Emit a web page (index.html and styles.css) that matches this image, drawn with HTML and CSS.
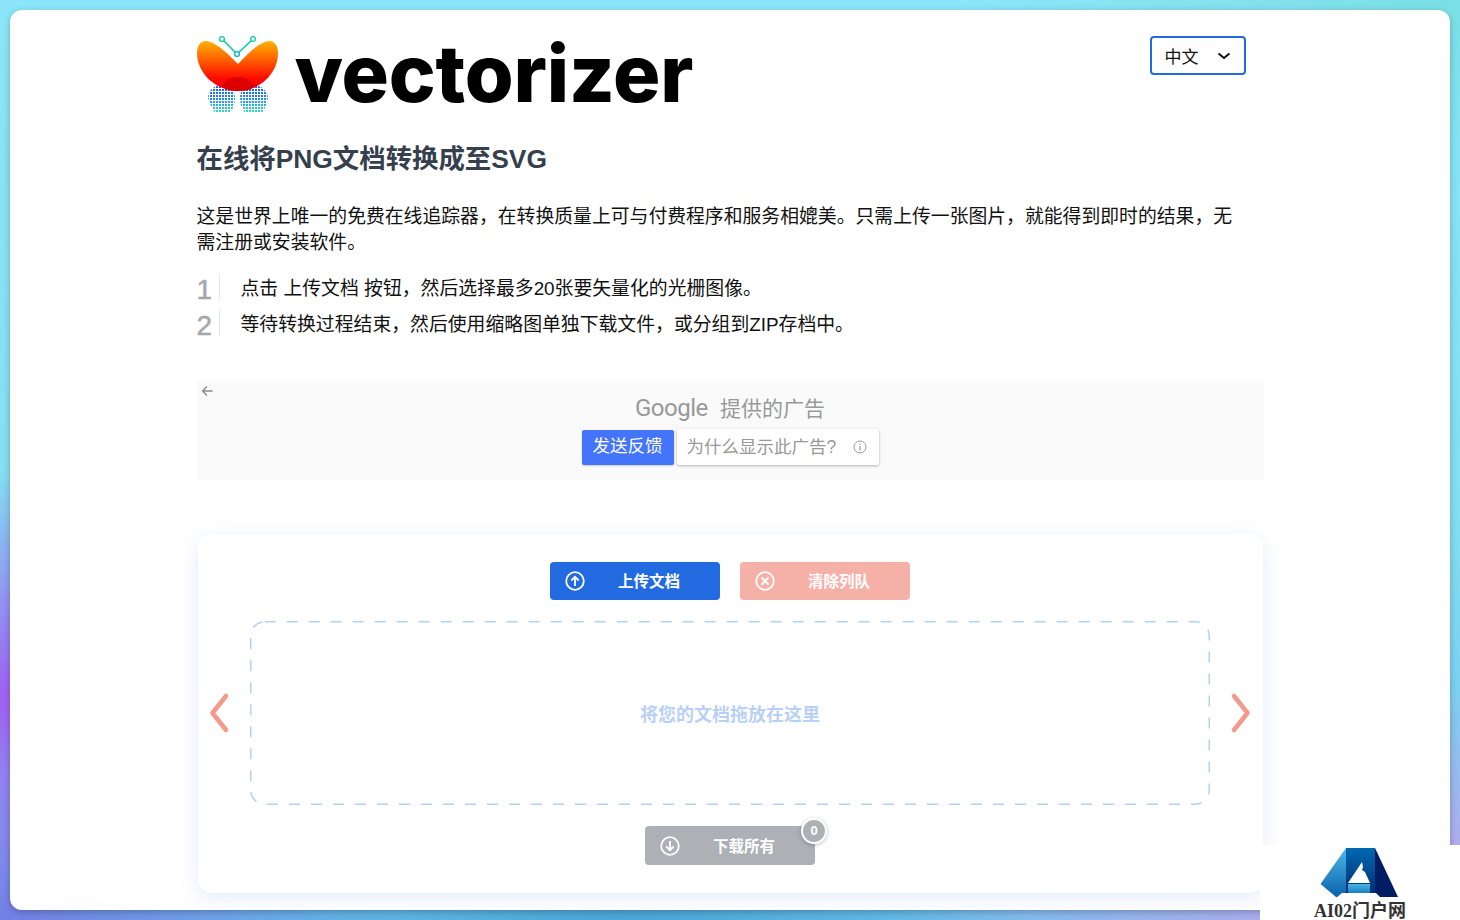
FILE: index.html
```html
<!DOCTYPE html>
<html lang="zh">
<head>
  <meta charset="UTF-8" />
  <title>Vectorizer</title>
  <meta name="viewport" content="width=device-width, initial-scale=1.0" />
  <link rel="stylesheet" href="styles.css">
</head>
<body>

  <div class="sheet">
    <div class="content">

      <div class="top-row">
        <div class="brand">
          <svg class="brand-mark" width="84" height="80" viewBox="0 0 84 80">
            <defs>
              <linearGradient id="wing" x1="0" y1="0" x2="0" y2="1">
                <stop offset="0" stop-color="#ffb300"/>
                <stop offset="0.75" stop-color="#ff0a00"/>
                <stop offset="1" stop-color="#f00000"/>
              </linearGradient>
              <linearGradient id="dots" gradientUnits="userSpaceOnUse" x1="0" y1="50" x2="0" y2="77">
                <stop offset="0" stop-color="#1f56f0"/>
                <stop offset="0.55" stop-color="#2196ee"/>
                <stop offset="1" stop-color="#30e8a8"/>
              </linearGradient>
            </defs>
            <path d="M11 62C11 54 18 49 25 49s13 5 13 13l-1 8-4 7H18l-4-7zM43 62c0-8 6-13 13-13s15 5 15 13l-2 8-4 7H48l-4-7z" fill="url(#dots)"/>
            <path class="brand-grid" d="M10 52.500h62M10 55.500h62M10 58.500h62M10 61.500h62M10 64.500h62M10 67.500h62M10 70.500h62M10 73.500h62M10 76.500h62M12.500 48v30M15.500 48v30M18.500 48v30M21.500 48v30M24.500 48v30M27.500 48v30M30.500 48v30M33.500 48v30M36.500 48v30M45.500 48v30M48.500 48v30M51.500 48v30M54.500 48v30M57.500 48v30M60.500 48v30M63.500 48v30M66.500 48v30M69.500 48v30"/>
            <path d="M41 28C33 20 20 6 9 5 3 5 0 10 0 17 0 38 20 55 41 55S81 38 81 17C81 10 78 5 72 5 61 6 49 20 41 28z" fill="url(#wing)"/>
            <path d="M25 51C28 44 34 41 41 41S54 44 58 51C52 54 47 55 41 55S30 54 25 51z" fill="#dd0000"/>
            <path d="M25 3 40 18 56 3" fill="none" stroke="#10c9a8" stroke-width="1.600"/>
            <circle cx="25" cy="3" r="2.400" fill="#fff" stroke="#14d49a" stroke-width="1.400"/>
            <circle cx="56" cy="3" r="2.400" fill="#fff" stroke="#14d49a" stroke-width="1.400"/>
            <circle cx="40" cy="18" r="2.400" fill="#fff" stroke="#0cb4d8" stroke-width="1.400"/>
          </svg>
          <span class="wordmark">vectorizer</span>
        </div>
        <div class="lang-select">
          <span>中文</span>
          <svg width="14" height="10" viewBox="0 0 14 10"><path d="M1.500 2.500 7 7l5.500-4.500" fill="none" stroke="#111" stroke-width="2"/></svg>
        </div>
      </div>

      <h1 class="page-title">在线将PNG文档转换成至SVG</h1>
      <p class="intro">这是世界上唯一的免费在线追踪器，在转换质量上可与付费程序和服务相媲美。只需上传一张图片，就能得到即时的结果，无需注册或安装软件。</p>

      <ol class="steps">
        <li><span class="step-num">1</span><span>点击 上传文档 按钮，然后选择最多20张要矢量化的光栅图像。</span></li>
        <li><span class="step-num">2</span><span>等待转换过程结束，然后使用缩略图单独下载文件，或分组到ZIP存档中。</span></li>
      </ol>

      <div class="ad-box">
        <svg class="ad-back" width="12" height="12" viewBox="0 0 12 12"><path d="M11.500 6H2M6 1.500 1.500 6 6 10.500" fill="none" stroke="#8a8a8a" stroke-width="1.300"/></svg>
        <div class="ad-label"><span class="ad-google">Google</span> 提供的广告</div>
        <div class="ad-buttons">
          <span class="ad-send">发送反馈</span>
          <span class="ad-why">为什么显示此广告?
            <svg width="14" height="14" viewBox="0 0 14 14"><circle cx="7" cy="7" r="6" fill="none" stroke="#999" stroke-width="1"/><path d="M7 6v4.500M7 3.500v1.200" stroke="#999" stroke-width="1.200"/></svg>
          </span>
        </div>
      </div>

      <div class="tool-card">
        <div class="tool-actions">
          <div class="btn btn-upload">
            <svg width="20" height="20" viewBox="0 0 20 20"><circle cx="10" cy="10" r="8.800" fill="none" stroke="#fff" stroke-width="1.800"/><path d="M10 15V6M6.300 9.500 10 5.800l3.700 3.700" fill="none" stroke="#fff" stroke-width="1.800"/></svg>
            <span>上传文档</span>
          </div>
          <div class="btn btn-clear">
            <svg width="20" height="20" viewBox="0 0 20 20"><circle cx="10" cy="10" r="8.800" fill="none" stroke="#fff" stroke-width="1.800"/><path d="M6.500 6.500l7 7M13.500 6.500l-7 7" fill="none" stroke="#fff" stroke-width="1.800"/></svg>
            <span>清除列队</span>
          </div>
        </div>

        <div class="drop-row">
          <svg class="chev" width="22" height="40" viewBox="0 0 22 40"><path d="M17 3 3.500 20 17 37" fill="none" stroke="#f39a8b" stroke-width="4.500" stroke-linecap="round" stroke-linejoin="round"/></svg>
          <div class="drop-zone">
            <svg class="drop-outline" width="960" height="184" viewBox="0 0 960 184"><rect x="0.750" y="0.750" width="958.500" height="182.500" rx="14" fill="none" stroke="#b7cff6" stroke-width="1.500" stroke-dasharray="11 11"/></svg>
            将您的文档拖放在这里
          </div>
          <svg class="chev" width="22" height="40" viewBox="0 0 22 40"><path d="M4 3l13.500 17L4 37" fill="none" stroke="#f39a8b" stroke-width="4.500" stroke-linecap="round" stroke-linejoin="round"/></svg>
        </div>

        <div class="tool-footer">
          <div class="btn btn-download">
            <svg width="20" height="20" viewBox="0 0 20 20"><circle cx="10" cy="10" r="8.800" fill="none" stroke="#fff" stroke-width="1.800"/><path d="M10 5v9M6.300 10.500 10 14.200l3.700-3.700" fill="none" stroke="#fff" stroke-width="1.800"/></svg>
            <span>下载所有</span>
            <b class="badge">0</b>
          </div>
        </div>
      </div>

    </div>
  </div>

  <div class="watermark">
    <svg width="80" height="52" viewBox="0 0 80 52">
      <defs>
        <linearGradient id="wmLeft" x1="0" y1="0" x2="0" y2="1"><stop offset="0" stop-color="#4fb8ea"/><stop offset="1" stop-color="#0a62ab"/></linearGradient>
        <linearGradient id="wmMid" x1="0" y1="0" x2="0" y2="1"><stop offset="0" stop-color="#0068b0"/><stop offset="1" stop-color="#002a70"/></linearGradient>
        <linearGradient id="wmBase" x1="0" y1="0" x2="0" y2="1"><stop offset="0" stop-color="#4db4e6"/><stop offset="1" stop-color="#0a72b8"/></linearGradient>
      </defs>
      <path d="M26 1 .5 37 16 50h12V1z" fill="url(#wmLeft)"/>
      <path d="M26 1h29v49H26z" fill="url(#wmMid)"/>
      <path d="M55 1l23 49H55z" fill="#001c62"/>
      <path d="M28 36 42 15l1 5-1 3 3 2 5 11z" fill="#fff"/>
      <path d="M28 37h22v11H28z" fill="url(#wmBase)"/>
      <path d="M16 51l6-5h34l5 5z" fill="#fff"/>
    </svg>
    <span>AI02门户网</span>
  </div>

</body>
</html>
```

FILE: styles.css
```css
/* Basic reset */
* {
  margin: 0;
  padding: 0;
  box-sizing: border-box;
}

body {
  height: 920px;
  overflow: hidden;
  padding: 10px;
  font-family: "Liberation Sans", "Noto Sans CJK SC", sans-serif;
  color: #111;
  background:
    radial-gradient(ellipse 240px 230px at 0 700px, #a060f2 0%, rgba(160,96,242,0) 100%),
    radial-gradient(ellipse 560px 240px at 1460px 920px, #cba2ec 0%, rgba(203,162,236,0) 100%),
    radial-gradient(ellipse 420px 130px at 620px 920px, #4aa6d8 0%, rgba(74,166,216,0) 100%),
    radial-gradient(ellipse 420px 160px at 0 920px, #7080e4 0%, rgba(112,128,228,0) 100%),
    radial-gradient(ellipse 500px 200px at 1460px 0, #7bdfe6 0%, rgba(123,223,230,0) 100%),
    linear-gradient(180deg, #8be6f9 0%, #84dff2 55%, #6fc2ee 100%);
}

.sheet {
  height: 900px;
  background-color: #fff;
  border-radius: 12px;
  overflow: hidden;
  box-shadow: 0 2px 7px rgba(0,0,0,0.25);
}

.content {
  width: 1067px;
  margin: 0 auto;
}

/* Header */
.top-row {
  display: flex;
  justify-content: space-between;
  align-items: flex-start;
  padding: 26px 18px 0 0;
  height: 124px;
}

.brand {
  display: flex;
  align-items: flex-start;
  gap: 14px;
  height: 80px;
}

.brand-mark {
  flex: none;
}

.brand-grid {
  fill: none;
  stroke: #fff;
  stroke-width: 1;
}

.wordmark {
  margin-top: -3px;
  font-family: Inter, sans-serif;
  font-size: 79px;
  font-weight: 800;
  letter-spacing: -0.200px;
  color: #000;
  line-height: 80px;
}

.lang-select {
  display: flex;
  align-items: center;
  justify-content: space-between;
  width: 96px;
  height: 39px;
  padding: 0 13px;
  border: 2px solid #226ae0;
  border-radius: 4px;
  font-size: 17px;
}

/* Intro text */
.page-title {
  margin-top: 7px;
  font-size: 26.400px;
  line-height: 36px;
  font-weight: 700;
  color: #363f4d;
}

.intro {
  margin-top: 27px;
  width: 1050px;
  font-size: 18.830px;
  line-height: 26px;
}

.steps {
  list-style: none;
  margin-top: 12px;
}

.steps li {
  display: flex;
  align-items: center;
  height: 36px;
  font-size: 18.850px;
}

.step-num {
  width: 23px;
  height: 27px;
  margin-right: 21px;
  border-right: 1px solid #e8e8e8;
  font-size: 28px;
  line-height: 33px;
  color: #a3a7ad;
  -webkit-text-stroke: 0.500px #a3a7ad;
}

/* Ad block */
.ad-box {
  position: relative;
  height: 99px;
  margin-top: 41px;
  padding-top: 14px;
  background-color: #fafafa;
  text-align: center;
}

.ad-back {
  position: absolute;
  left: 4px;
  top: 4px;
}

.ad-label {
  font-family: Roboto, "Noto Sans CJK SC", sans-serif;
  font-size: 21px;
  line-height: 27px;
  color: #999;
}

.ad-google {
  font-size: 24px;
  margin-right: 7px;
  letter-spacing: -0.500px;
}

.ad-buttons {
  display: flex;
  justify-content: center;
  gap: 3px;
  margin-top: 6px;
  font-size: 17.500px;
}

.ad-send {
  width: 92px;
  height: 35px;
  margin-top: 1px;
  border-radius: 2px;
  background-color: #4374f9;
  color: #fff;
  line-height: 33px;
  box-shadow: 0 1px 2px rgba(0,0,0,0.2);
}

.ad-why {
  display: flex;
  align-items: center;
  justify-content: space-between;
  width: 202px;
  height: 36px;
  padding: 0 12px 3px 10px;
  border-radius: 2px;
  background-color: #fff;
  color: #999;
  box-shadow: 0 1px 3px rgba(0,0,0,0.3);
}

.ad-why svg {
  margin-top: 3px;
}

/* Upload card */
.tool-card {
  width: 1065px;
  height: 359px;
  margin: 54px 0 0 1px;
  padding-top: 28px;
  background-color: #fff;
  border-radius: 14px;
  box-shadow: 0 5px 20px rgba(60,110,230,0.14);
}

.tool-actions {
  display: flex;
  justify-content: center;
  gap: 20px;
}

.btn {
  position: relative;
  display: flex;
  align-items: center;
  width: 170px;
  height: 38px;
  padding-left: 15px;
  border-radius: 4px;
  color: #fff;
  font-size: 15.500px;
  font-weight: 700;
}

.btn span {
  flex: 1;
  text-align: center;
  padding: 0 7px 2px 0;
}

.btn-upload {
  background-color: #226ae0;
}

.btn-clear {
  background-color: #f5b1a7;
}

.btn-download {
  height: 39px;
  background-color: #adb0b5;
}

.drop-row {
  display: flex;
  align-items: center;
  justify-content: space-between;
  height: 184px;
  margin-top: 21px;
  padding: 0 11px;
}

.drop-zone {
  position: relative;
  display: flex;
  align-items: center;
  justify-content: center;
  width: 960px;
  height: 184px;
  font-size: 18px;
  font-weight: 700;
  color: #b9d0f6;
}

.drop-outline {
  position: absolute;
  left: 0;
  top: 0;
}

.tool-footer {
  display: flex;
  justify-content: center;
  margin-top: 21px;
}

.badge {
  position: absolute;
  right: -12px;
  top: -8px;
  width: 26px;
  height: 26px;
  border: 2px solid #fff;
  border-radius: 50%;
  background-color: #adb0b5;
  font-size: 13px;
  line-height: 21px;
  text-align: center;
  box-shadow: 0 1px 4px rgba(0,0,0,0.25);
}

/* Corner stamp */
.watermark {
  position: absolute;
  left: 1260px;
  top: 845px;
  width: 200px;
  height: 75px;
  display: flex;
  flex-direction: column;
  align-items: center;
  padding-top: 2px;
  overflow: hidden;
  background-color: #fff;
  font-family: "Liberation Serif", "Noto Sans CJK SC", serif;
  font-size: 18px;
  font-weight: 700;
  line-height: 18px;
  color: #333;
}

.watermark svg {
  flex: none;
}

.watermark span {
  flex: none;
  margin-top: 3px;
}
```
